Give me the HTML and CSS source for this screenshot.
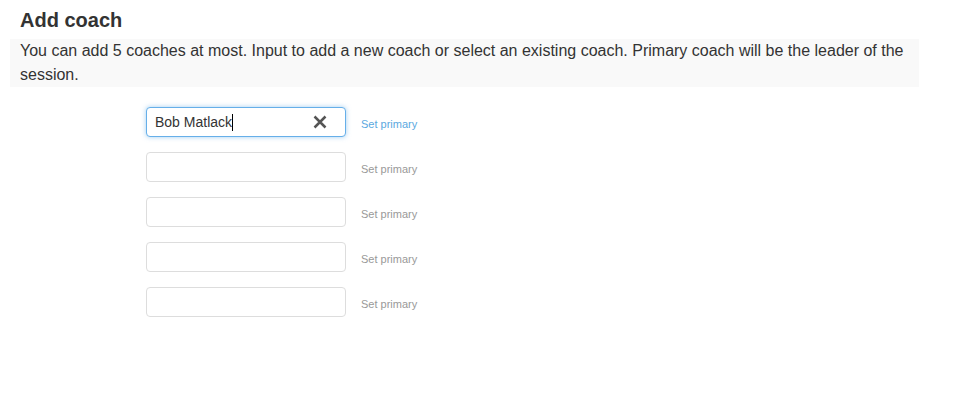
FILE: index.html
```html
<!DOCTYPE html>
<html>
<head>
<meta charset="utf-8">
<link rel="stylesheet" href="styles.css">
</head>
<body>
<div class="page">
  <h2 class="title">Add coach</h2>
  <p class="note">You can add 5 coaches at most. Input to add a new coach or select an existing coach. Primary coach will be the leader of the session.</p>
  <div class="coaches">
    <div class="row">
      <div class="field focused">
        <span class="value">Bob Matlack</span><span class="caret"></span>
        <span class="clear"><svg width="14" height="14" viewBox="0 0 14 14"><path d="M1.5 1.5 L12.5 12.5 M12.5 1.5 L1.5 12.5" stroke="#555" stroke-width="2.5" fill="none"/></svg></span>
      </div>
      <a class="primary active">Set primary</a>
    </div>
    <div class="row"><div class="field"></div><a class="primary">Set primary</a></div>
    <div class="row"><div class="field"></div><a class="primary">Set primary</a></div>
    <div class="row"><div class="field"></div><a class="primary">Set primary</a></div>
    <div class="row"><div class="field"></div><a class="primary">Set primary</a></div>
  </div>
</div>
</body>
</html>
```
FILE: styles.css
```css
html, body { margin: 0; padding: 0; background: #fff; }
body { font-family: "Liberation Sans", Arial, sans-serif; color: #333; }
.page { padding: 8px 44px 0 10px; }
.title { margin: 0 0 7px 10px; font-size: 20px; line-height: 24px; font-weight: bold; color: #333; }
.note { margin: 0; padding: 0 10px; background: #f9f9f9; font-size: 16px; line-height: 24px; color: #333; }
.coaches { display: flex; flex-direction: column; gap: 15px; padding: 20px 0 0 136px; }
.row { display: flex; align-items: center; }
.field { box-sizing: border-box; width: 200px; height: 30px; border: 1px solid #ddd; border-radius: 4px; background: #fff; display: flex; align-items: center; padding-left: 8px; position: relative; font-size: 14px; color: #333; }
.field.focused { border-color: #66afe9; box-shadow: 0 0 5px rgba(102,175,233,.6); }
.caret { display: inline-block; width: 1px; height: 17px; background: #000; }
.clear { position: absolute; right: 18px; top: 7px; width: 14px; height: 14px; display: flex; }
.primary { margin-left: 15px; padding-top: 3px; font-size: 11px; color: #999; cursor: pointer; }
.primary.active { color: #5ba8e0; }
```
